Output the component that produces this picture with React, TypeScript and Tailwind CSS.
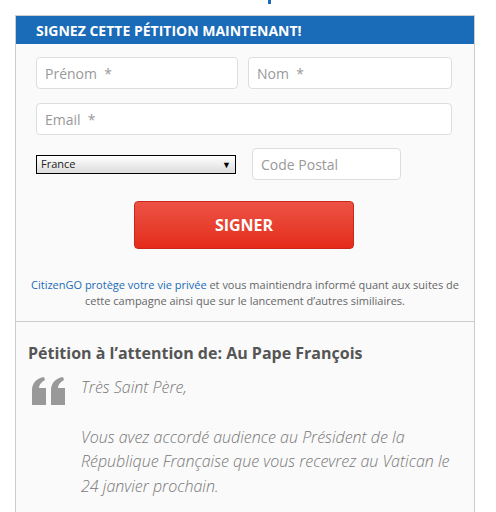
export default function App() {
  return (
    <div className="min-h-[512px] bg-white font-['Open_Sans',sans-serif]">
      <div className="flex h-[15px] justify-center">
        <div className="ml-[42px] h-[4px] w-[3px] bg-[#1a6bb8]" />
      </div>
      <div className="ml-[15px] w-[460px] border border-[#cccccc] bg-[#fafafa]">
        <div className="flex h-[28px] items-center bg-[#1a6bb8] pl-[20px]">
          <span className="text-[14px] font-bold text-white">
            SIGNEZ CETTE PÉTITION MAINTENANT!
          </span>
        </div>

        <form className="flex flex-col pl-[20px] pr-[22px] pt-[13px]">
          <div className="flex gap-[10px]">
            <input
              className="h-[32px] w-[202px] rounded-[4px] border border-[#dddddd] bg-white px-[8px] text-[14px] text-[#555] placeholder:text-[#999] outline-none"
              placeholder="Prénom  *"
            />
            <input
              className="h-[32px] w-[204px] rounded-[4px] border border-[#dddddd] bg-white px-[8px] text-[14px] text-[#555] placeholder:text-[#999] outline-none"
              placeholder="Nom  *"
            />
          </div>
          <input
            className="mt-[14px] h-[32px] w-full rounded-[4px] border border-[#dddddd] bg-white px-[8px] text-[14px] text-[#555] placeholder:text-[#999] outline-none"
            placeholder="Email  *"
          />
          <div className="mt-[13px] flex items-center gap-[16px]">
            <div className="flex h-[19px] w-[200px] items-center justify-between border border-black bg-gradient-to-b from-white to-[#dcdcdc] pl-[4px] pr-[4px]">
              <span className="text-[11px] text-[#222]">France</span>
              <span className="text-[9px] leading-none text-black">▼</span>
            </div>
            <input
              className="h-[32px] w-[149px] rounded-[4px] border border-[#dddddd] bg-white px-[8px] text-[14px] text-[#555] placeholder:text-[#999] outline-none"
              placeholder="Code Postal"
            />
          </div>
          <div className="mt-[21px] flex justify-center">
            <button
              type="button"
              className="h-[48px] w-[220px] rounded-[4px] border border-[#c9281a] bg-gradient-to-b from-[#ec5244] to-[#e42a17] text-[16px] font-bold text-white"
            >
              SIGNER
            </button>
          </div>
        </form>

        <p className="mt-[28px] px-[12px] pb-[12px] text-center text-[11px] leading-[16px] text-[#666]">
          <span className="text-[#1a6bb8]">CitizenGO protège votre vie privée</span>{" "}
          et vous maintiendra informé quant aux suites de cette campagne ainsi que sur le lancement d’autres similiaires.
        </p>

        <div className="border-t border-[#cccccc] px-[12px] pt-[20px] pb-[30px]">
          <h2 className="text-[16px] font-bold leading-[22px] text-[#555]">
            Pétition à l’attention de: Au Pape François
          </h2>
          <div className="mt-[11px] flex">
            <svg
              viewBox="0 0 34 28"
              className="ml-[4px] mt-[2px] h-[28px] w-[34px] shrink-0 fill-[#999]"
            >
              <path d="M0 13 C0 6 5 1 12 0 L13 3 C9 5 7 8 7 11 L14 11 L14 28 L0 28 Z" />
              <path d="M19 13 C19 6 24 1 31 0 L32 3 C28 5 26 8 26 11 L33 11 L33 28 L19 28 Z" />
            </svg>
            <div className="ml-[15px] text-[16px] font-light italic leading-[24.5px] text-[#777]">
              <p>Très Saint Père,</p>
              <p className="mt-[25px]">
                Vous avez accordé audience au Président de la République Française que vous recevrez au Vatican le 24 janvier prochain.
              </p>
            </div>
          </div>
        </div>
      </div>
    </div>
  );
}
